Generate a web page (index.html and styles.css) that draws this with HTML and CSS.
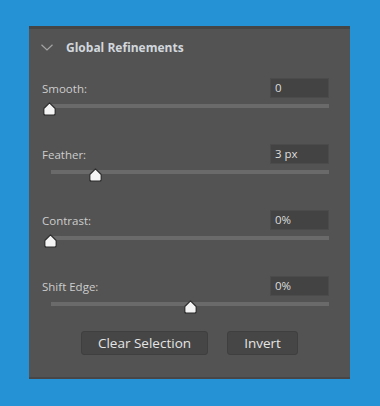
FILE: index.html
```html
<!DOCTYPE html>
<html lang="en">
<head>
  <meta charset="UTF-8" />
  <meta name="viewport" content="width=device-width, initial-scale=1.0"/>
  <title>Global Refinements</title>
  <link rel="stylesheet" href="styles.css">
</head>
<body>

  <div class="panel">
    <div class="panel-header">
      <svg class="chevron" width="12" height="7" viewBox="0 0 12 7">
        <path d="M0.5 0.8 L6 6 L11.5 0.8" fill="none" stroke="#a4a4a4" stroke-width="1.2"/>
      </svg>
      <span class="panel-title">Global Refinements</span>
    </div>

    <div class="fields">
      <div class="field">
        <div class="field-top">
          <label>Smooth:</label>
          <div class="value-box">0</div>
        </div>
        <div class="track">
          <svg class="thumb" style="left: -8px" width="13" height="14" viewBox="0 0 13 14">
            <path d="M6.5 0.8 L12.2 6.5 L12.2 11.5 Q12.2 13.2 10.5 13.2 L2.5 13.2 Q0.8 13.2 0.8 11.5 L0.8 6.5 Z" fill="#f4f4f4" stroke="#2b2b2b" stroke-width="1.2" stroke-linejoin="round"/>
          </svg>
        </div>
      </div>

      <div class="field">
        <div class="field-top">
          <label>Feather:</label>
          <div class="value-box">3 px</div>
        </div>
        <div class="track">
          <svg class="thumb" style="left: 38px" width="13" height="14" viewBox="0 0 13 14">
            <path d="M6.5 0.8 L12.2 6.5 L12.2 11.5 Q12.2 13.2 10.5 13.2 L2.5 13.2 Q0.8 13.2 0.8 11.5 L0.8 6.5 Z" fill="#f4f4f4" stroke="#2b2b2b" stroke-width="1.2" stroke-linejoin="round"/>
          </svg>
        </div>
      </div>

      <div class="field">
        <div class="field-top">
          <label>Contrast:</label>
          <div class="value-box">0%</div>
        </div>
        <div class="track">
          <svg class="thumb" style="left: -7px" width="13" height="14" viewBox="0 0 13 14">
            <path d="M6.5 0.8 L12.2 6.5 L12.2 11.5 Q12.2 13.2 10.5 13.2 L2.5 13.2 Q0.8 13.2 0.8 11.5 L0.8 6.5 Z" fill="#f4f4f4" stroke="#2b2b2b" stroke-width="1.2" stroke-linejoin="round"/>
          </svg>
        </div>
      </div>

      <div class="field">
        <div class="field-top">
          <label>Shift Edge:</label>
          <div class="value-box">0%</div>
        </div>
        <div class="track">
          <svg class="thumb" style="left: 133px" width="13" height="14" viewBox="0 0 13 14">
            <path d="M6.5 0.8 L12.2 6.5 L12.2 11.5 Q12.2 13.2 10.5 13.2 L2.5 13.2 Q0.8 13.2 0.8 11.5 L0.8 6.5 Z" fill="#f4f4f4" stroke="#2b2b2b" stroke-width="1.2" stroke-linejoin="round"/>
          </svg>
        </div>
      </div>
    </div>

    <div class="actions">
      <button class="btn btn-clear">Clear Selection</button>
      <button class="btn btn-invert">Invert</button>
    </div>
  </div>

</body>
</html>
```

FILE: styles.css
```css
:root {
  --page-bg: #2592d6;
  --panel-bg: #535353;
  --panel-edge: #454545;
  --box-bg: #434343;
  --box-border: #4b4b4b;
  --track: #6a6a6a;
  --label: #cdcdcd;
  --title: #d2d7dd;
}

body {
  background-color: var(--page-bg);
  margin: 0;
  padding: 26px 0 0 29px;
  font-family: 'Open Sans', sans-serif;
}

.panel {
  box-sizing: border-box;
  width: 321px;
  height: 353px;
  background-color: var(--panel-bg);
  border-top: 3px solid var(--panel-edge);
  border-bottom: 2px solid #484646;
  padding: 0 21px 0 13px;
}

.panel-header {
  display: flex;
  align-items: center;
  height: 36px;
}

.chevron {
  margin-left: -1px;
  margin-right: 13px;
}

.panel-title {
  color: var(--title);
  font-size: 12px;
  font-weight: 700;
}

.fields {
  display: flex;
  flex-direction: column;
  gap: 36px;
  margin-top: 13px;
}

.field-top {
  display: flex;
  justify-content: space-between;
  align-items: center;
  height: 20px;
}

.field-top label {
  color: var(--label);
  font-size: 11.5px;
  font-weight: 500;
}

.value-box {
  box-sizing: border-box;
  width: 59px;
  height: 20px;
  background-color: var(--box-bg);
  border: 1px solid var(--box-border);
  color: #dedede;
  font-size: 11.5px;
  line-height: 18px;
  padding-left: 4px;
}

.track {
  position: relative;
  height: 4px;
  margin: 6px 0 0 9px;
  background-color: var(--track);
}

.thumb {
  position: absolute;
  top: -2px;
}

.actions {
  display: flex;
  justify-content: center;
  gap: 19px;
  margin-top: 25px;
  padding-left: 8px;
}

.btn {
  box-sizing: border-box;
  height: 24px;
  background-color: #464646;
  border: 1px solid #3f3f3f;
  border-radius: 3px;
  color: #e4e4e4;
  font-family: 'Open Sans', sans-serif;
  font-size: 13.5px;
  padding: 0;
}

.btn-clear {
  width: 127px;
}

.btn-invert {
  width: 71px;
}
```
